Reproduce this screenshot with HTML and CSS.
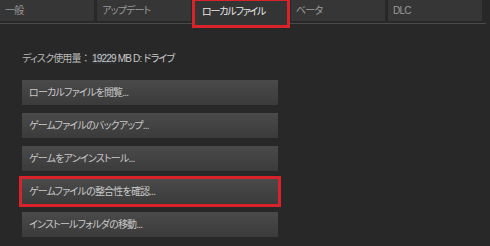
FILE: index.html
```html
<!DOCTYPE html>
<html>
<head>
    <title>プロパティ</title>
    <meta charset="UTF-8">
    <link rel="stylesheet" href="styles.css">
</head>
<body>
    <div class="tabs">
        <div class="tab">一般</div>
        <div class="tab">アップデート</div>
        <div class="tab active">ローカルファイル</div>
        <div class="tab">ベータ</div>
        <div class="tab">DLC</div>
    </div>

    <div class="content">
        <div class="disk">
            ディスク使用量<span class="colon">：</span> <span class="disk-value"><span class="num">19229</span> MB D: ドライブ</span>
        </div>

        <div class="buttons">
            <div class="btn">ローカルファイルを閲覧...</div>
            <div class="btn">ゲームファイルのバックアップ...</div>
            <div class="btn">ゲームをアンインストール...</div>
            <div class="btn marked">ゲームファイルの整合性を確認...</div>
            <div class="btn">インストールフォルダの移動...</div>
        </div>
    </div>
</body>
</html>
```

FILE: styles.css
```css
:root {
    --bg: #282828;
    --tab: #363636;
    --mark: #d8232a;
    --text: #b9b9b9;
}

body {
    margin: 0;
    width: 490px;
    height: 246px;
    overflow: hidden;
    background: var(--bg);
    font-family: "Liberation Sans", "Noto Sans CJK JP", sans-serif;
    font-size: 10px;
    letter-spacing: -0.8px;
    font-feature-settings: "palt";
    color: var(--text);
}

/* タブ */
.tabs {
    display: flex;
    gap: 3px;
    width: 486px;
    height: 24px;
    border-bottom: 1px solid #4a4a4a;
    box-sizing: border-box;
}

.tab {
    width: 94px;
    height: 21px;
    line-height: 22px;
    padding-left: 5px;
    box-sizing: border-box;
    background: var(--tab);
    color: #9a9a9a;
    white-space: nowrap;
}

.tab.active {
    height: 26px;
    background: #343434;
    color: #e6e6e6;
    padding-left: 8px;
    line-height: 23px;
    letter-spacing: -1.2px;
    outline: 3px solid var(--mark);
    outline-offset: -1px;
    position: relative;
}

/* 内容 */
.content {
    padding: 26px 0 0 22px;
}

.disk {
    height: 18px;
    line-height: 18px;
    margin-bottom: 12px;
}

.colon {
    font-feature-settings: normal;
}

.disk-value {
    color: #c9c9c9;
}

.num {
    background: #2c2f33;
}

.buttons {
    display: flex;
    flex-direction: column;
    gap: 8px;
}

.btn {
    width: 256px;
    height: 25px;
    line-height: 25px;
    padding-left: 7px;
    box-sizing: border-box;
    background: linear-gradient(#4a4a4a, #3b3b3b);
    color: #c8c8c8;
    white-space: nowrap;
}

.btn.marked {
    outline: 3px solid var(--mark);
    outline-offset: 0;
}
```
